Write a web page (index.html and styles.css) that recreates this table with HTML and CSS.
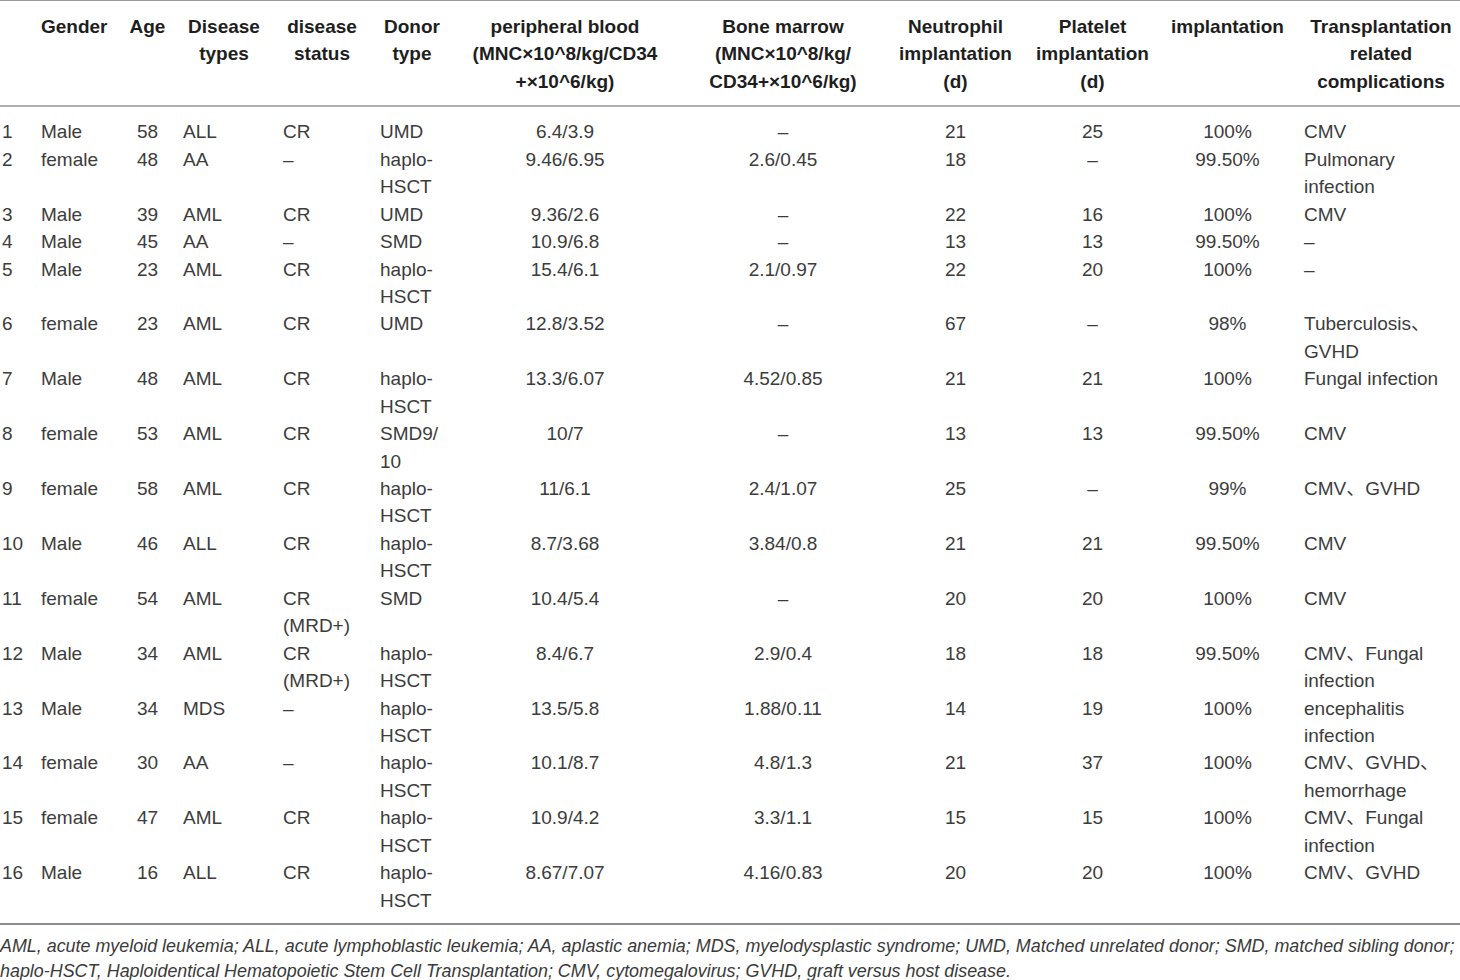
FILE: index.html
```html
<!DOCTYPE html>
<html lang="en">
<head>
  <meta charset="UTF-8">
  <title>Transplantation table</title>
  <link rel="stylesheet" href="styles.css">
</head>
<body>

  <table class="cases">
    <thead>
      <tr>
        <th></th>
        <th>Gender</th>
        <th>Age</th>
        <th>Disease<br>types</th>
        <th>disease<br>status</th>
        <th>Donor<br>type</th>
        <th>peripheral blood<br>(MNC×10^8/kg/CD34<br>+×10^6/kg)</th>
        <th>Bone marrow<br>(MNC×10^8/kg/<br>CD34+×10^6/kg)</th>
        <th>Neutrophil<br>implantation<br>(d)</th>
        <th>Platelet<br>implantation<br>(d)</th>
        <th>implantation</th>
        <th>Transplantation<br>related<br>complications</th>
      </tr>
    </thead>
    <tbody>
      <tr><td>1</td><td>Male</td><td>58</td><td>ALL</td><td>CR</td><td>UMD</td><td>6.4/3.9</td><td>–</td><td>21</td><td>25</td><td>100%</td><td>CMV</td></tr>
      <tr><td>2</td><td>female</td><td>48</td><td>AA</td><td>–</td><td>haplo-<br>HSCT</td><td>9.46/6.95</td><td>2.6/0.45</td><td>18</td><td>–</td><td>99.50%</td><td>Pulmonary<br>infection</td></tr>
      <tr><td>3</td><td>Male</td><td>39</td><td>AML</td><td>CR</td><td>UMD</td><td>9.36/2.6</td><td>–</td><td>22</td><td>16</td><td>100%</td><td>CMV</td></tr>
      <tr><td>4</td><td>Male</td><td>45</td><td>AA</td><td>–</td><td>SMD</td><td>10.9/6.8</td><td>–</td><td>13</td><td>13</td><td>99.50%</td><td>–</td></tr>
      <tr><td>5</td><td>Male</td><td>23</td><td>AML</td><td>CR</td><td>haplo-<br>HSCT</td><td>15.4/6.1</td><td>2.1/0.97</td><td>22</td><td>20</td><td>100%</td><td>–</td></tr>
      <tr><td>6</td><td>female</td><td>23</td><td>AML</td><td>CR</td><td>UMD</td><td>12.8/3.52</td><td>–</td><td>67</td><td>–</td><td>98%</td><td>Tuberculosis、<br>GVHD</td></tr>
      <tr><td>7</td><td>Male</td><td>48</td><td>AML</td><td>CR</td><td>haplo-<br>HSCT</td><td>13.3/6.07</td><td>4.52/0.85</td><td>21</td><td>21</td><td>100%</td><td>Fungal infection</td></tr>
      <tr><td>8</td><td>female</td><td>53</td><td>AML</td><td>CR</td><td>SMD9/<br>10</td><td>10/7</td><td>–</td><td>13</td><td>13</td><td>99.50%</td><td>CMV</td></tr>
      <tr><td>9</td><td>female</td><td>58</td><td>AML</td><td>CR</td><td>haplo-<br>HSCT</td><td>11/6.1</td><td>2.4/1.07</td><td>25</td><td>–</td><td>99%</td><td>CMV、GVHD</td></tr>
      <tr><td>10</td><td>Male</td><td>46</td><td>ALL</td><td>CR</td><td>haplo-<br>HSCT</td><td>8.7/3.68</td><td>3.84/0.8</td><td>21</td><td>21</td><td>99.50%</td><td>CMV</td></tr>
      <tr><td>11</td><td>female</td><td>54</td><td>AML</td><td>CR<br>(MRD+)</td><td>SMD</td><td>10.4/5.4</td><td>–</td><td>20</td><td>20</td><td>100%</td><td>CMV</td></tr>
      <tr><td>12</td><td>Male</td><td>34</td><td>AML</td><td>CR<br>(MRD+)</td><td>haplo-<br>HSCT</td><td>8.4/6.7</td><td>2.9/0.4</td><td>18</td><td>18</td><td>99.50%</td><td>CMV、Fungal<br>infection</td></tr>
      <tr><td>13</td><td>Male</td><td>34</td><td>MDS</td><td>–</td><td>haplo-<br>HSCT</td><td>13.5/5.8</td><td>1.88/0.11</td><td>14</td><td>19</td><td>100%</td><td>encephalitis<br>infection</td></tr>
      <tr><td>14</td><td>female</td><td>30</td><td>AA</td><td>–</td><td>haplo-<br>HSCT</td><td>10.1/8.7</td><td>4.8/1.3</td><td>21</td><td>37</td><td>100%</td><td>CMV、GVHD、<br>hemorrhage</td></tr>
      <tr><td>15</td><td>female</td><td>47</td><td>AML</td><td>CR</td><td>haplo-<br>HSCT</td><td>10.9/4.2</td><td>3.3/1.1</td><td>15</td><td>15</td><td>100%</td><td>CMV、Fungal<br>infection</td></tr>
      <tr><td>16</td><td>Male</td><td>16</td><td>ALL</td><td>CR</td><td>haplo-<br>HSCT</td><td>8.67/7.07</td><td>4.16/0.83</td><td>20</td><td>20</td><td>100%</td><td>CMV、GVHD</td></tr>
    </tbody>
  </table>

  <p class="footnote">
    AML, acute myeloid leukemia; ALL, acute lymphoblastic leukemia; AA, aplastic anemia; MDS, myelodysplastic syndrome; UMD, Matched unrelated donor; SMD, matched sibling donor;<br>
    haplo-HSCT, Haploidentical Hematopoietic Stem Cell Transplantation; CMV, cytomegalovirus; GVHD, graft versus host disease.
  </p>

</body>
</html>
```

FILE: styles.css
```css
* {
  margin: 0;
  padding: 0;
  box-sizing: border-box;
}
body {
  font-family: 'Liberation Sans', Arial, 'Noto Sans CJK SC', sans-serif;
  background-color: #fff;
  color: #3c3c3c;
  width: 1460px;
}
.cases {
  width: 1460px;
  border-collapse: collapse;
  table-layout: fixed;
  border-top: 1px solid #9a9a9a;
  border-bottom: 2px solid #8c8c8c;
}
.cases th,
.cases td {
  font-size: 19px;
  line-height: 27.44px;
  padding: 0 4px;
  vertical-align: top;
  white-space: nowrap;
}
.cases th {
  font-weight: bold;
  color: #1e1e1e;
  text-align: center;
  padding-top: 12px;
  padding-bottom: 10px;
  border-bottom: 2px solid #b0b0b0;
}
.cases td {
  text-align: center;
}
.cases tbody tr:first-child td {
  padding-top: 11px;
}
.cases tbody tr:last-child td {
  padding-bottom: 9px;
}

/* column widths and alignment */
.cases th:nth-child(1), .cases td:nth-child(1) { width: 38px; padding-left: 2px; text-align: left; }
.cases th:nth-child(2), .cases td:nth-child(2) { width: 87px; padding-left: 3px; text-align: left; }
.cases th:nth-child(3), .cases td:nth-child(3) { width: 45px; }
.cases th:nth-child(4), .cases td:nth-child(4) { width: 104px; padding-left: 13px; padding-right: 9px; }
.cases th:nth-child(5), .cases td:nth-child(5) { width: 97px; padding-left: 9px; padding-right: 10px; }
.cases th:nth-child(6), .cases td:nth-child(6) { width: 79px; padding-left: 9px; padding-right: 6px; }
.cases th:nth-child(7), .cases td:nth-child(7) { width: 230px; }
.cases th:nth-child(8), .cases td:nth-child(8) { width: 206px; }
.cases th:nth-child(9), .cases td:nth-child(9) { width: 139px; }
.cases th:nth-child(10), .cases td:nth-child(10) { width: 135px; }
.cases th:nth-child(11), .cases td:nth-child(11) { width: 135px; }
.cases th:nth-child(12), .cases td:nth-child(12) { width: 165px; padding-left: 9px; padding-right: 2px; }

.cases td:nth-child(4),
.cases td:nth-child(5),
.cases td:nth-child(6),
.cases td:nth-child(12) {
  text-align: left;
}

.footnote {
  font-style: italic;
  font-size: 17.9px;
  line-height: 25px;
  color: #3a3a3a;
  padding-top: 9px;
  white-space: nowrap;
}
```
